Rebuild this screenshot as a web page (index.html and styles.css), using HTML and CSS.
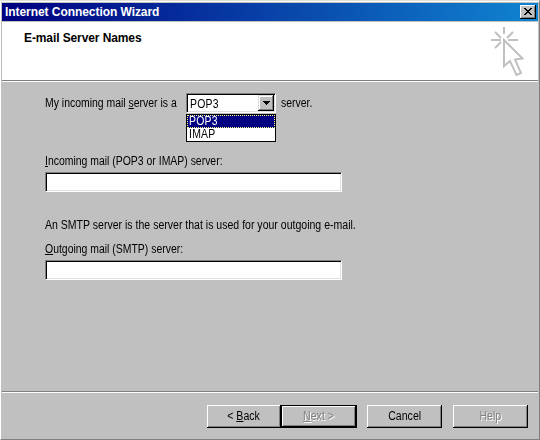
FILE: index.html
```html
<!DOCTYPE html>
<html lang="en">
<head>
<meta charset="utf-8">
<title>Internet Connection Wizard</title>
<link rel="stylesheet" href="styles.css">
</head>
<body>
<div class="window">
  <div class="titlebar">
    <span class="title">Internet Connection Wizard</span>
    <button class="close" aria-label="Close"><svg width="8" height="7" viewBox="0 0 8 7" shape-rendering="crispEdges"><path d="M0 0h2v1h1v1h2v-1h1v-1h2v1h-1v1h-1v1h-1v1h1v1h1v1h1v1h-2v-1h-1v-1h-2v1h-1v1h-2v-1h1v-1h1v-1h1v-1h-1v-1h-1v-1h-1z"/></svg></button>
  </div>
  <header class="header">
    <h1>E-mail Server Names</h1>
    <svg class="cursor" width="34" height="50" viewBox="0 0 34 50" fill="none" stroke="#c0c0c0" stroke-width="2">
      <path d="M14 0v7M1 13h10M18 13h10M5 5l6 6M23 5l-6 6M5 21l6-6"/>
      <path d="M14 13v26l6-5 6.500 14 4.500-2-6-13.500 7.500-1z"/>
    </svg>
  </header>
  <main class="content">
    <div class="server-type">
      <label class="lead text">My incoming mail <u>s</u>erver is a</label>
      <div class="select">
        <div class="combo"><span class="text">POP3</span><div class="arrow"><svg width="7" height="4" viewBox="0 0 7 4" shape-rendering="crispEdges"><path d="M0 0h7v1h-1v1h-1v1h-1v1h-1v-1h-1v-1h-1v-1h-1z"/></svg></div></div>
        <div class="list"><div class="option selected"><span class="text">POP3</span></div><div class="option"><span class="text">IMAP</span></div></div>
      </div>
      <span class="tail text">server.</span>
    </div>
    <label class="incoming text"><u>I</u>ncoming mail (POP3 or IMAP) server:</label>
    <div class="input"></div>
    <p class="note text">An SMTP server is the server that is used for your outgoing e-mail.</p>
    <label class="outgoing text"><u>O</u>utgoing mail (SMTP) server:</label>
    <div class="input"></div>
  </main>
  <footer class="footer">
    <div class="button back"><span>&lt; <u>B</u>ack</span></div>
    <div class="button next disabled"><span><u>N</u>ext &gt;</span></div>
    <div class="button cancel"><span>Cancel</span></div>
    <div class="button help disabled"><span>Help</span></div>
  </footer>
</div>
</body>
</html>
```
FILE: styles.css
```css
* { box-sizing: border-box; }
body { margin: 0; font: 12px/13px "Liberation Sans", Arial, sans-serif; color: #000; }
.window { width: 540px; height: 440px; background: #c0c0c0; border: 1px solid; border-color: #dfdfdf #808080 #808080 #fff; padding: 2px 1px 0; display: flex; flex-direction: column; box-shadow: inset 0 1px #fff; }
.titlebar { height: 18px; padding: 0 2px 0 3px; display: flex; align-items: center; justify-content: space-between; background: linear-gradient(90deg, #000080, #1084d0); color: #fff; font-weight: bold; }
.title { white-space: nowrap; letter-spacing: -.06px; }
.close { width: 16px; height: 14px; padding: 0 1px 1px 0; border: 0; background: #c0c0c0; box-shadow: inset -1px -1px #000, inset 1px 1px #fff, inset -2px -2px #808080; display: flex; align-items: center; justify-content: center; }
.header { height: 60px; margin-top: 1px; background: #fff; border-bottom: 1px solid #fff; box-shadow: inset 0 -1px #808080; display: flex; justify-content: space-between; padding: 5px 14px 0 22px; }
h1 { margin: 5px 0 0; font-size: 12px; line-height: 13px; letter-spacing: -.1px; white-space: nowrap; }
.cursor { flex: none; }
.content { height: 309px; padding: 11px 0 0 43px; white-space: nowrap; }
/* condensed face, close to the system dialog font */
.text { transform: scaleX(.87); transform-origin: 0 50%; }
.server-type { display: flex; height: 50px; align-items: flex-start; }
.lead { width: 141px; margin-top: 4px; }
.select { width: 90px; }
.combo { height: 20px; background: #fff; border: 1px solid; border-color: #808080 #fff #fff #808080; box-shadow: inset 1px 1px #000, inset -1px -1px #dfdfdf; padding: 1px 1px 1px 3px; display: flex; justify-content: space-between; }
.combo .text { width: 40px; margin-top: 3px; letter-spacing: .3px; }
.arrow { width: 16px; height: 16px; background: #c0c0c0; box-shadow: inset -1px -1px #000, inset 1px 1px #dfdfdf, inset -2px -2px #808080, inset 2px 2px #fff; display: flex; align-items: center; justify-content: center; }
.list { margin-top: 1px; height: 28px; background: #fff; border: 1px solid #000; }
.option { height: 13px; padding-left: 2px; letter-spacing: .3px; }
.option .text { display: block; }
.selected { background: #000080; color: #fff; outline: 1px dotted #ffff80; outline-offset: -1px; }
.tail { margin: 4px 0 0 5px; }
.incoming, .outgoing { display: block; }
.incoming { margin-top: 12px; }
.input { width: 297px; height: 20px; background: #fff; border: 1px solid; border-color: #808080 #fff #fff #808080; box-shadow: inset 1px 1px #000, inset -1px -1px #dfdfdf; margin-top: 4px; }
.note { margin: 27px 0 0; transform: scaleX(.878); }
.outgoing { margin-top: 11px; }
u { text-decoration: underline; text-underline-offset: 1px; text-decoration-thickness: 1px; }
.footer { border-top: 1px solid #808080; box-shadow: inset 0 1px #fff; display: flex; padding: 13px 0 0 205px; height: 48px; }
.button { height: 23px; width: 75px; display: flex; justify-content: center; align-items: center; white-space: nowrap; box-shadow: inset -1px -1px #000, inset 1px 1px #fff, inset -2px -2px #808080; }
.button span { transform: scaleX(.88); }
.back { width: 74px; }
.next { width: 76px; border: 1px solid #000; }
.cancel { margin-left: 10px; }
.help { margin-left: 11px; }
.disabled { color: #808080; text-shadow: 1px 1px #fff; }
```
